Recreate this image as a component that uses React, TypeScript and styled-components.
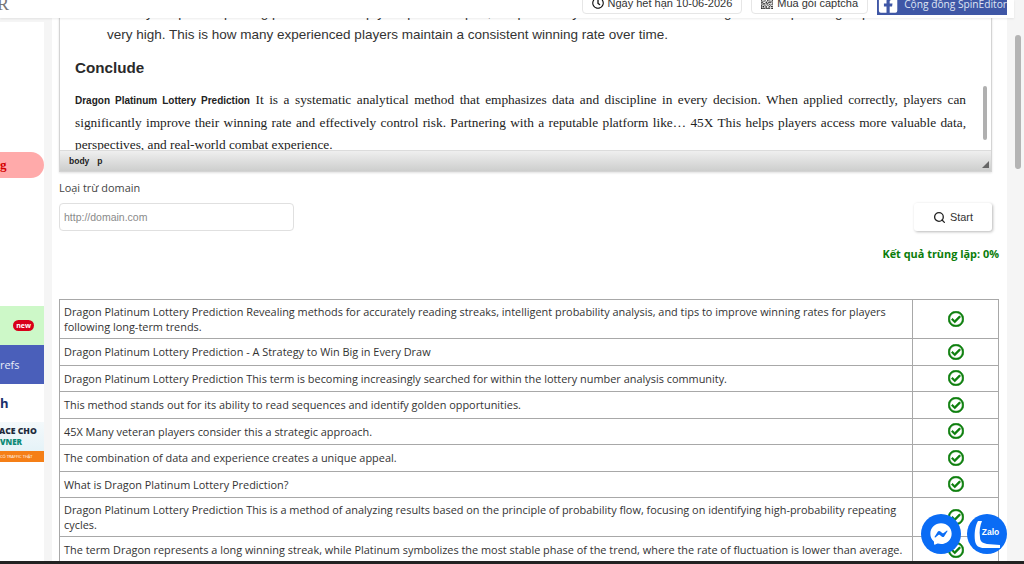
import React from 'react';
import styled, { createGlobalStyle } from 'styled-components';
import { FaFacebookMessenger, FaFacebookSquare, FaRegCheckCircle, FaRegClock } from 'react-icons/fa';
import { BsQrCode } from 'react-icons/bs';
import { Search } from 'lucide-react';

const rows = [
  'Dragon Platinum Lottery Prediction Revealing methods for accurately reading streaks, intelligent probability analysis, and tips to improve winning rates for players following long-term trends.',
  'Dragon Platinum Lottery Prediction - A Strategy to Win Big in Every Draw',
  'Dragon Platinum Lottery Prediction This term is becoming increasingly searched for within the lottery number analysis community.',
  'This method stands out for its ability to read sequences and identify golden opportunities.',
  '45X Many veteran players consider this a strategic approach.',
  'The combination of data and experience creates a unique appeal.',
  'What is Dragon Platinum Lottery Prediction?',
  'Dragon Platinum Lottery Prediction This is a method of analyzing results based on the principle of probability flow, focusing on identifying high-probability repeating cycles.',
  'The term Dragon represents a long winning streak, while Platinum symbolizes the most stable phase of the trend, where the rate of fluctuation is lower than average.',
];

const App = () => (
  <Page>
    <GlobalStyle />
    <TopBar>
      <Logo>R</Logo>
      <TopActions>
        <TopButton>
          <FaRegClock size={12} color="#111" />
          Ngày hết hạn 10-06-2026
        </TopButton>
        <TopButton>
          <BsQrCode size={12} color="#222" />
          Mua gói captcha
        </TopButton>
        <FacebookButton>
          <FaFacebookSquare size={21} color="#fff" />
          Cộng đồng SpinEditor
        </FacebookButton>
      </TopActions>
    </TopBar>

    <Sidebar>
      <PillItem>g</PillItem>
      <NewItem>
        <NewBadge>new</NewBadge>
      </NewItem>
      <BlueItem>refs</BlueItem>
      <PlainItem>h</PlainItem>
      <Banner>
        <BannerTitle>ACE CHO</BannerTitle>
        <BannerSub>VNER</BannerSub>
        <BannerStrip>CÓ TRAFFIC THẬT</BannerStrip>
      </Banner>
    </Sidebar>

    <Main>
      <Editor>
        <EditorBody>
          <ListText>
            When you spot a repeating pattern and keep your position open, the probability of the next
            round landing on the expected group is considered very high. This is how many experienced
            players maintain a consistent winning rate over time.
          </ListText>
          <Heading>Conclude</Heading>
          <Paragraph>
            <Strong>Dragon Platinum Lottery Prediction</Strong> It is a systematic analytical method that
            emphasizes data and discipline in every decision. When applied correctly, players can
            significantly improve their winning rate and effectively control risk. Partnering with a
            reputable platform like… 45X This helps players access more valuable data, perspectives, and
            real-world combat experience.
          </Paragraph>
          <EditorScroll />
        </EditorBody>
        <StatusBar>
          <Crumb>body</Crumb>
          <Crumb>p</Crumb>
          <Grip />
        </StatusBar>
      </Editor>

      <FieldLabel>Loại trừ domain</FieldLabel>
      <FieldRow>
        <DomainInput placeholder="http://domain.com" />
        <StartButton>
          <Search size={13} color="#222" strokeWidth={2.4} />
          Start
        </StartButton>
      </FieldRow>
      <Result>Kết quả trùng lặp: 0%</Result>

      <ResultTable>
        <tbody>
          {rows.map(text => (
            <tr key={text}>
              <TextCell>{text}</TextCell>
              <IconCell>
                <FaRegCheckCircle size={16} color="#0a7d0a" />
              </IconCell>
            </tr>
          ))}
        </tbody>
      </ResultTable>
    </Main>

    <PageScroll>
      <PageThumb />
    </PageScroll>

    <Widgets>
      <Widget>
        <FaFacebookMessenger size={22} color="#fff" />
      </Widget>
      <Widget>
        <svg width="40" height="40" viewBox="0 0 40 40">
          <path
            d="M11 7 C8 12 7 20 8 27 C9 32 12 34 17 34 L33 34 L33 31 L20 30 C15 29 13 27 13 23 C12 17 13 12 15 7 Z"
            fill="#fff"
          />
          <ZaloText x="23.5" y="21" textAnchor="middle">
            Zalo
          </ZaloText>
        </svg>
      </Widget>
    </Widgets>
    <BottomEdge />
  </Page>
);

const GlobalStyle = createGlobalStyle`
  html, body {
    margin: 0;
    height: 564px;
    overflow: hidden;
    background: #f5f5f5;
  }
  * {
    box-sizing: border-box;
  }
`;

const Page = styled.div`
  position: relative;
  display: flex;
  width: 1024px;
  height: 564px;
  overflow: hidden;
  font-family: 'Open Sans', sans-serif;
  color: #333;
`;

const TopBar = styled.header`
  position: absolute;
  top: 0;
  left: 0;
  z-index: 3;
  display: flex;
  justify-content: space-between;
  width: 1014px;
  height: 18px;
  overflow: hidden;
  background: #fff;
  box-shadow: 0 1px 2px rgba(0, 0, 0, 0.08);
`;

const Logo = styled.div`
  margin: -6px 0 0 -3px;
  font-family: 'Liberation Serif', serif;
  font-size: 18px;
  line-height: 20px;
  color: #777;
`;

const TopActions = styled.div`
  display: flex;
  align-items: flex-start;
  gap: 9px;
  padding-right: 7px;
`;

const TopButton = styled.div`
  display: flex;
  align-items: center;
  gap: 4px;
  height: 28px;
  margin-top: -14px;
  padding: 6px 9px 0;
  border: 1px solid #e6e6e6;
  border-radius: 4px;
  background: #fff;
  font-family: 'Liberation Sans', sans-serif;
  font-size: 11px;
  white-space: nowrap;
  color: #333;
`;

const FacebookButton = styled.div`
  display: flex;
  align-items: center;
  gap: 6px;
  width: 130px;
  height: 30px;
  margin-top: -15px;
  padding: 7px 0 0 1px;
  background: #3f57a6;
  font-size: 10.2px;
  white-space: nowrap;
  color: #dfe5f4;
`;

const Sidebar = styled.aside`
  display: flex;
  flex-direction: column;
  flex: 0 0 44px;
  height: 542px;
  margin-top: 22px;
  overflow: hidden;
  background: #fff;
`;

const PillItem = styled.div`
  display: flex;
  align-items: center;
  height: 26px;
  margin-top: 130px;
  border-radius: 0 13px 13px 0;
  background: #ffaaaa;
  font-family: 'Liberation Serif', serif;
  font-size: 13px;
  font-weight: 700;
  color: #d40000;
`;

const NewItem = styled.div`
  display: flex;
  align-items: center;
  justify-content: flex-end;
  height: 39px;
  margin-top: 128px;
  padding-right: 10px;
  background: #cdf8c8;
`;

const NewBadge = styled.span`
  padding: 0 2px;
  border: 1px dotted #d8001a;
  border-radius: 7px;
  background: #d8001a;
  font-size: 7px;
  font-weight: 700;
  line-height: 9px;
  color: #fff;
`;

const BlueItem = styled.div`
  display: flex;
  align-items: center;
  height: 39px;
  background: #4a5fba;
  font-size: 10.9px;
  color: #e8ecf8;
`;

const PlainItem = styled.div`
  height: 38px;
  padding-top: 10px;
  font-size: 13px;
  font-weight: 700;
  line-height: 18px;
  color: #1b2f6b;
`;

const Banner = styled.div`
  display: flex;
  flex-direction: column;
  height: 40px;
  background: linear-gradient(#f4f9fb, #dff0f6);
  white-space: nowrap;
`;

const BannerTitle = styled.div`
  margin: 4px 0 0 -1px;
  font-size: 8.6px;
  font-weight: 800;
  line-height: 11px;
  color: #1e2b3c;
`;

const BannerSub = styled.div`
  font-size: 8px;
  font-weight: 800;
  line-height: 9px;
  color: #0d8a76;
`;

const BannerStrip = styled.div`
  margin-top: auto;
  padding-top: 3px;
  height: 11px;
  background: #f57f17;
  font-size: 4px;
  line-height: 5px;
  color: #fff;
`;

const Main = styled.main`
  flex: 0 0 955px;
  height: 564px;
  margin-left: 8px;
  padding-left: 7px;
  overflow: hidden;
  background: #fff;
`;

const Editor = styled.section`
  width: 933px;
  height: 172px;
  border: 1px solid #d4d4d4;
  border-top: 0;
  box-shadow: 0 1px 2px rgba(0, 0, 0, 0.12);
`;

const EditorBody = styled.div`
  position: relative;
  height: 150px;
  padding: 2px 25px 0 15px;
  overflow: hidden;
  color: #333;
`;

const ListText = styled.p`
  margin: 0;
  padding-left: 32px;
  font-family: 'Liberation Sans', sans-serif;
  font-size: 13.5px;
  line-height: 22px;
`;

const Heading = styled.h2`
  margin: 13px 0 0;
  font-family: 'Liberation Sans', sans-serif;
  font-size: 15.2px;
  font-weight: 700;
  line-height: 18px;
  color: #2a2a2a;
`;

const Paragraph = styled.p`
  margin: 12px 0 0;
  font-family: 'Liberation Serif', serif;
  font-size: 13.33px;
  line-height: 22px;
  text-align: justify;
  color: #222;
`;

const Strong = styled.strong`
  font-family: 'Liberation Sans', sans-serif;
  font-size: 10px;
`;

const EditorScroll = styled.div`
  position: absolute;
  top: 86px;
  right: 4px;
  width: 4px;
  height: 54px;
  border-radius: 2px;
  background: #b0b0b0;
`;

const StatusBar = styled.div`
  display: flex;
  align-items: center;
  gap: 8px;
  position: relative;
  height: 21px;
  padding-left: 9px;
  border-top: 1px solid #dcdcdc;
  background: linear-gradient(#efefef, #cdcecd);
`;

const Crumb = styled.span`
  font-family: 'Liberation Sans', sans-serif;
  font-size: 8.5px;
  font-weight: 700;
  color: #222;
`;

const Grip = styled.i`
  position: absolute;
  right: 2px;
  bottom: 3px;
  width: 0;
  height: 0;
  border-left: 7px solid transparent;
  border-bottom: 7px solid #666;
`;

const FieldLabel = styled.div`
  margin-top: 9px;
  font-size: 10.92px;
  line-height: 14px;
  color: #444;
`;

const FieldRow = styled.div`
  display: flex;
  justify-content: space-between;
  width: 933px;
  margin-top: 8px;
`;

const DomainInput = styled.input`
  width: 235px;
  height: 28px;
  padding: 0 4px;
  border: 1px solid #e0e0e0;
  border-radius: 4px;
  outline: 0;
  font-family: 'Liberation Sans', sans-serif;
  font-size: 10.5px;
  &::placeholder {
    color: #8a8a8a;
  }
`;

const StartButton = styled.div`
  display: flex;
  align-items: center;
  justify-content: center;
  gap: 4px;
  width: 78px;
  height: 28px;
  border-radius: 3px;
  background: #fff;
  box-shadow: 1px 1px 3px rgba(0, 0, 0, 0.28);
  font-family: 'Liberation Sans', sans-serif;
  font-size: 10.9px;
  color: #333;
`;

const Result = styled.div`
  width: 940px;
  margin-top: 15px;
  font-size: 10.92px;
  font-weight: 700;
  line-height: 16px;
  text-align: right;
  color: #0a7d0a;
`;

const ResultTable = styled.table`
  width: 940px;
  margin-top: 37px;
  border-collapse: collapse;
  table-layout: fixed;
  font-size: 10.92px;
  line-height: 15px;
  color: #333;
`;

const TextCell = styled.td`
  height: 26.5px;
  padding: 4px;
  border: 1px solid #a8a8a8;
`;

const IconCell = styled.td`
  width: 86px;
  border: 1px solid #a8a8a8;
  text-align: center;
  svg {
    display: block;
    margin: 0 auto;
    stroke: currentColor;
    stroke-width: 22px;
  }
`;

const PageScroll = styled.div`
  flex: 1;
  height: 564px;
  padding: 35px 2px 0 8px;
`;

const PageThumb = styled.div`
  width: 6px;
  height: 134px;
  border-radius: 3px;
  background: #b4b4b4;
`;

const Widgets = styled.div`
  position: absolute;
  right: 17px;
  bottom: 10px;
  z-index: 4;
  display: flex;
  gap: 6px;
`;

const Widget = styled.div`
  display: flex;
  align-items: center;
  justify-content: center;
  width: 40px;
  height: 40px;
  border-radius: 50%;
  background: #0a6cf5;
`;

const ZaloText = styled.text`
  font-family: 'Liberation Sans', sans-serif;
  font-size: 8.5px;
  font-weight: 700;
  fill: #fff;
`;

const BottomEdge = styled.div`
  position: absolute;
  left: 0;
  bottom: 0;
  z-index: 5;
  width: 100%;
  height: 3px;
  background: #222;
`;

export default App;
